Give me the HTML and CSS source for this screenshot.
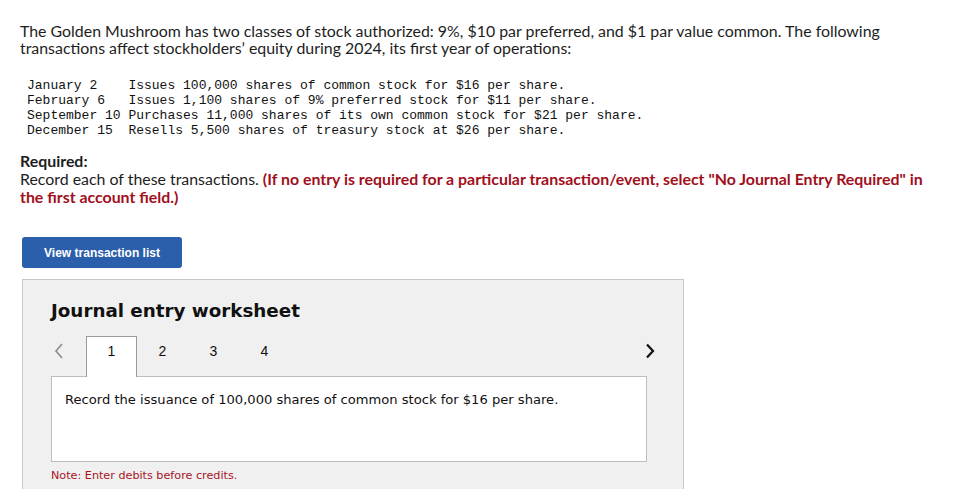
FILE: index.html
```html
<!DOCTYPE html>
<html lang="en">
<head>
<meta charset="utf-8">
<title>Journal entry worksheet</title>
<link rel="stylesheet" href="styles.css">
</head>
<body>
<div class="page">
  <p class="intro">The Golden Mushroom has two classes of stock authorized: 9%, $10 par preferred, and $1 par value common. The following transactions affect stockholders’ equity during 2024, its first year of operations:</p>
<pre class="trans">January 2    Issues 100,000 shares of common stock for $16 per share.
February 6   Issues 1,100 shares of 9% preferred stock for $11 per share.
September 10 Purchases 11,000 shares of its own common stock for $21 per share.
December 15  Resells 5,500 shares of treasury stock at $26 per share.</pre>
  <div class="required">
    <div class="req-title">Required:</div>
    <div class="req-text">Record each of these transactions. <span class="warn">(If no entry is required for a particular transaction/event, select "No Journal Entry Required" in the first account field.)</span></div>
  </div>
  <button class="btn" type="button">View transaction list</button>
  <div class="panel">
    <h2 class="ws-title">Journal entry worksheet</h2>
    <div class="tabrow">
      <span class="nav prev"><svg width="12" height="18" viewBox="0 0 12 18"><path d="M9 2 L3 9 L9 16" fill="none" stroke="#8a8a8a" stroke-width="1.6"/></svg></span>
      <span class="tab active">1</span>
      <span class="tab">2</span>
      <span class="tab">3</span>
      <span class="tab">4</span>
      <span class="spacer"></span>
      <span class="nav next"><svg width="12" height="18" viewBox="0 0 12 18"><path d="M3 2.5 L9 9 L3 15.5" fill="none" stroke="#111" stroke-width="2.2"/></svg></span>
    </div>
    <div class="content">Record the issuance of 100,000 shares of common stock for $16 per share.</div>
    <div class="note">Note: Enter debits before credits.</div>
  </div>
</div>
</body>
</html>
```

FILE: styles.css
```css
html, body {
  margin: 0;
  padding: 0;
  background: #ffffff;
}
.page {
  padding: 22px 20px 0 20px;
  color: #1d1d1d;
  font-family: "Lato", "Liberation Sans", sans-serif;
}
.intro {
  margin: 0;
  font-size: 15.9px;
  line-height: 17px;
  width: 900px;
}
.trans {
  margin: 22px 0 0 7px;
  font-family: "Liberation Mono", monospace;
  font-size: 13px;
  line-height: 15px;
  color: #111;
}
.required {
  margin-top: 14px;
  font-size: 15.9px;
  line-height: 18px;
}
.req-title {
  font-weight: 700;
}
.warn {
  color: #a10f1c;
  font-weight: 700;
}
.btn {
  display: block;
  margin: 31px 0 0 2px;
  width: 160px;
  height: 31px;
  border: none;
  border-radius: 3px;
  background: #2c5fab;
  color: #ffffff;
  font-family: "Liberation Sans", Arial, sans-serif;
  font-weight: 700;
  font-size: 12px;
  padding: 0;
}
.panel {
  margin: 11px 0 0 2px;
  width: 662px;
  box-sizing: border-box;
  height: 210px;
  background: #f0f0f0;
  border: 1px solid #c8c8c8;
  border-bottom: none;
  padding: 0 38px 0 28px;
  font-family: "DejaVu Sans", Verdana, sans-serif;
}
.ws-title {
  margin: 19px 0 0 0;
  font-size: 18.3px;
  line-height: 24px;
  font-weight: 700;
  color: #111;
}
.tabrow {
  display: flex;
  align-items: stretch;
  height: 40px;
  margin-top: 13px;
  margin-right: -13px;
  position: relative;
  z-index: 1;
}
.nav {
  display: flex;
  align-items: center;
  height: 30px;
}
.prev {
  width: 35px;
  justify-content: flex-start;
  padding-left: 2px;
  box-sizing: border-box;
}
.next {
  width: 14px;
}
.spacer {
  flex: 1;
}
.tab {
  width: 51px;
  box-sizing: border-box;
  text-align: center;
  font-size: 14px;
  line-height: 30px;
  color: #111;
  font-family: "Liberation Sans", Arial, sans-serif;
}
.tab.active {
  background: #ffffff;
  border: 1px solid #9a9a9a;
  border-bottom: none;
  height: 41px;
  line-height: 28px;
}
.content {
  box-sizing: border-box;
  height: 86px;
  width: 596px;
  background: #ffffff;
  border: 1px solid #bdbdbd;
  padding: 14px 13px;
  font-size: 13.1px;
  line-height: 17px;
  color: #111;
}
.note {
  margin-top: 7px;
  font-size: 11.2px;
  line-height: 14px;
  color: #a8141f;
}
```
